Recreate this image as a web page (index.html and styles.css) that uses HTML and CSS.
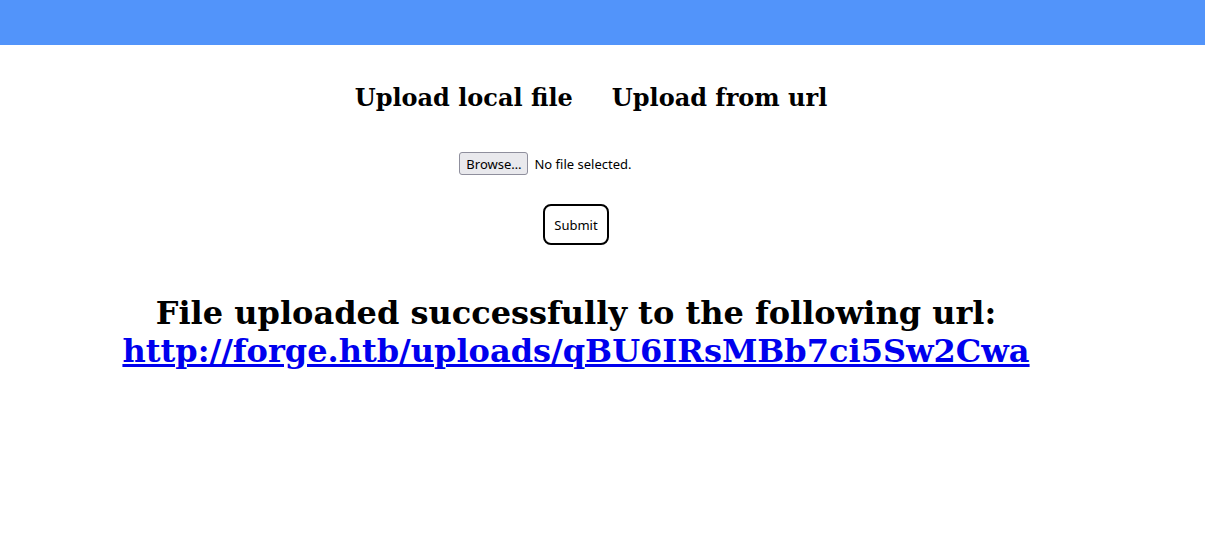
FILE: index.html
```html
<!DOCTYPE html>
<html>
<head>
<meta charset="utf-8">
<link rel="stylesheet" href="styles.css">
</head>
<body>
<header class="topbar"></header>
<main class="page">
  <nav class="tabs">
    <a class="tab">Upload local file</a>
    <a class="tab">Upload from url</a>
  </nav>
  <form class="upload-form">
    <div class="file-row">
      <span class="browse">Browse…</span>
      <span class="file-status">No file selected.</span>
    </div>
    <button type="button" class="submit">Submit</button>
  </form>
  <section class="result">
    <h1 class="result-title">File uploaded successfully to the following url:</h1>
    <a class="result-link" href="#">http://forge.htb/uploads/qBU6IRsMBb7ci5Sw2Cwa</a>
  </section>
</main>
</body>
</html>
```
FILE: styles.css
```css
html, body {
  margin: 0;
  padding: 0;
  background: #ffffff;
  font-family: "DejaVu Serif", serif;
}
.topbar {
  height: 45px;
  background: #5294fa;
}
.page {
  display: flex;
  flex-direction: column;
  align-items: center;
}
.tabs {
  display: flex;
  gap: 39px;
  margin-top: 38px;
  margin-right: 23px;
}
.tab {
  font-family: "DejaVu Serif", serif;
  font-weight: bold;
  font-size: 24px;
  color: #000;
  line-height: 30px;
}
.upload-form {
  display: flex;
  flex-direction: column;
  align-items: center;
  margin-top: 39px;
  margin-right: 53px;
}
.file-row {
  display: flex;
  align-items: center;
  gap: 6px;
  margin-right: 61px;
  font-family: "Noto Sans", sans-serif;
  font-size: 13px;
  color: #000;
}
.browse {
  box-sizing: border-box;
  height: 23px;
  width: 69px;
  display: flex;
  align-items: center;
  justify-content: center;
  background: #e9e9ed;
  border: 1px solid #8f8f9d;
  border-radius: 3px;
}
.submit {
  margin-top: 29px;
  box-sizing: border-box;
  width: 66px;
  height: 41px;
  background: #fff;
  border: 2px solid #000;
  border-radius: 8px;
  font-family: "Noto Sans", sans-serif;
  font-size: 13px;
  color: #000;
  padding: 0;
}
.result {
  display: flex;
  flex-direction: column;
  align-items: center;
  margin-top: 49px;
  margin-right: 53px;
}
.result-title {
  margin: 0;
  font-size: 32px;
  font-weight: bold;
  line-height: 38px;
}
.result-link {
  font-size: 32px;
  font-weight: bold;
  line-height: 38px;
  color: #0000ee;
  text-decoration: underline;
}
```
